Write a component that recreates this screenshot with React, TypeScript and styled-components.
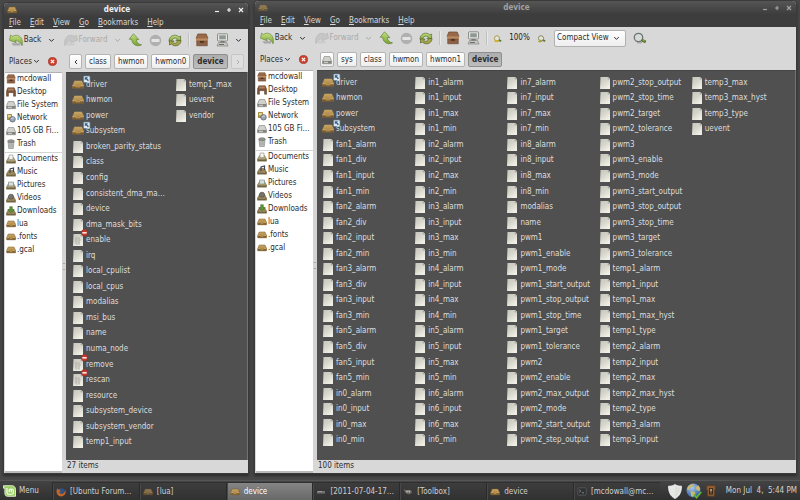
import React from "react";
import styled, { createGlobalStyle, css } from "styled-components";

const GlobalStyle = createGlobalStyle`
  * { box-sizing: border-box; }
  body {
    margin: 0;
    background: #484848;
    font-family: "DejaVu Sans Condensed", "DejaVu Sans", sans-serif;
    font-size: 8px;
    line-height: 12px;
    color: #2c2c2c;
  }
  button, select { font: inherit; color: inherit; margin: 0; padding: 0; border: 0; background: none; }
  ul { list-style: none; margin: 0; padding: 0; }
  svg { display: block; flex: none; }
`;

/* ---------- layout ---------- */

const Desktop = styled.div`
  display: flex;
  flex-direction: column;
  min-height: 100vh;
`;

const Workspace = styled.main`
  flex: 1;
  display: grid;
  grid-template-columns: 244fr 541fr;
  gap: 7px;
  padding: 0 4px 7px;
`;

const WindowFrame = styled.section<{ $top: number }>`
  display: flex;
  flex-direction: column;
  min-width: 0;
  margin-top: ${(p) => p.$top}px;
  background: #d8d8d8;
  border-radius: 4px 4px 0 0;
  box-shadow: 0 0 0 1px #3b3b3b, 0 2px 3px 1px #2b2b2b;
`;

const TitleBar = styled.header<{ $active: boolean }>`
  display: grid;
  grid-template-columns: 16px 1fr 36px;
  align-items: center;
  height: 13px;
  padding: 0 1px 0 3px;
  border-radius: 4px 4px 0 0;
  background: linear-gradient(#555, #3e3e3e);
  color: ${(p) => (p.$active ? "#f0f0f0" : "#a2a2a2")};
`;

const Title = styled.h1`
  margin: 0;
  font-size: 8px;
  line-height: 12px;
  text-align: center;
`;

const WindowButtons = styled.div`
  display: flex;
`;

const WindowButton = styled.button`
  display: grid;
  place-items: center;
  width: 12px;
  height: 12px;
`;

const MenuBar = styled.nav`
  display: flex;
  gap: 9px;
  height: 13px;
  padding: 0 5px;
  background: #3d3d3d;
  color: #d8d8d8;
`;

const MenuItem = styled.button`
  line-height: 13px;
  u { text-underline-offset: 1px; }
`;

const ToolBar = styled.div`
  display: flex;
  align-items: center;
  height: 22px;
  padding-left: 4px;
`;

const ToolButton = styled.button<{ $w: number }>`
  display: flex;
  align-items: center;
  justify-content: center;
  gap: 1px;
  width: ${(p) => p.$w}px;
  height: 20px;
  flex: none;
  white-space: nowrap;
  &:disabled { color: #a9a9a9; }
`;

const Divider = styled.span`
  width: 1px;
  height: 14px;
  margin: 0 3px;
  background: #c0c0c0;
  box-shadow: 1px 0 #e8e8e8;
`;

const ZoomLevel = styled.span`
  width: 29px;
  text-align: center;
  color: #222;
`;

const SelectWrap = styled.label`
  display: grid;
  grid-template-columns: 1fr 12px;
  align-items: center;
  width: 72px;
  height: 17px;
  margin: 0 4px 0 5px;
  border: 1px solid #b0b0b0;
  border-radius: 2px;
  background: linear-gradient(#fff, #eee);
  select {
    grid-area: 1 / 1 / 2 / 3;
    appearance: none;
    width: 100%;
    height: 15px;
    padding-left: 2px;
  }
  svg { grid-area: 1 / 2; pointer-events: none; }
`;

const LocationRow = styled.div`
  display: flex;
  align-items: center;
  height: 21px;
  padding: 0 4px;
`;

const PlacesHeader = styled.div`
  display: flex;
  align-items: center;
  gap: 8px;
  width: 61px;
  padding-left: 1px;
`;

const PlacesButton = styled.button`
  display: flex;
  align-items: center;
  gap: 1px;
`;

const PathBar = styled.nav`
  display: flex;
  gap: 3px;
  flex: 1;
`;

const PathButton = styled.button<{ $current?: boolean; $end?: boolean; $tight?: boolean }>`
  display: grid;
  place-items: center;
  height: 15px;
  min-width: 13px;
  padding: 0 ${(p) => (p.$tight ? 1 : 3)}px;
  border: 1px solid #b4b4b4;
  border-radius: 2px;
  background: linear-gradient(#fff, #eee);
  &:disabled { color: #b0b0b0; background: #dedede; border-color: #c6c6c6; }
  ${(p) => p.$end && css`margin-left: auto;`}
  ${(p) =>
    p.$current &&
    css`
      font-weight: bold;
      border-color: #8e8e8e;
      background: linear-gradient(#adadad, #bdbdbd);
    `}
`;

const Body = styled.div`
  flex: 1;
  display: grid;
  grid-template-columns: 58px 1fr;
`;

const Sidebar = styled.aside`
  padding-top: 1px;
  background: #fff;
  box-shadow: inset 0 1px #b2b2b2;
  border-bottom: 2px solid #b8b8b8;
  margin-left: 1px;
`;

const PlaceList = styled.ul<{ $height: number }>`
  display: grid;
  grid-auto-rows: 1fr;
  min-height: ${(p) => p.$height}px;
  & + & {
    margin-top: 1px;
    border-top: 1px solid #d2d2d2;
  }
`;

const PlaceButton = styled.button`
  display: flex;
  align-items: center;
  gap: 1px;
  width: 100%;
  height: 12px;
  padding-left: 1px;
  white-space: nowrap;
  text-align: left;
`;

const Content = styled.div`
  display: flex;
  flex-direction: column;
  min-width: 0;
`;

const FilesRow = styled.div`
  flex: 1;
  display: grid;
  grid-template-columns: 4px 1fr;
`;

const Sash = styled.div`
  display: grid;
  place-items: center;
  background: #d4d4d4;
  &::before {
    content: "";
    width: 2px;
    height: 5px;
    border: solid #a8a8a8;
    border-width: 1px 0;
  }
`;

const FileGrid = styled.ul<{ $columns: number; $wide: boolean }>`
  display: grid;
  grid-auto-flow: column;
  grid-template-rows: repeat(24, minmax(15px, 1fr));
  grid-template-columns: ${(p) => (p.$wide ? `repeat(${p.$columns}, minmax(0, 1fr))` : `103px 1fr`)};
  padding: ${(p) => (p.$wide ? "5px 12px 12px 5px" : "5px 5px 10px 6px")};
  background: #505050;
  border: 1px solid #737373;
  border-width: 0 1px 0 0;
  box-shadow: inset 0 1px #444;
`;

const FileItem = styled.li`
  display: flex;
  align-items: center;
  gap: 2px;
  color: #dedede;
  white-space: nowrap;
`;

const StatusBar = styled.footer`
  height: 13px;
  padding-left: 5px;
  line-height: 12px;
`;

const TaskBar = styled.footer`
  display: flex;
  align-items: stretch;
  height: 20px;
  padding-top: 1px;
  border-top: 1px solid #565656;
  background: linear-gradient(#434343, #303030);
  color: #d2d2d2;
`;

const StartButton = styled.button`
  display: flex;
  align-items: center;
  gap: 3px;
  width: 52px;
  padding-left: 3px;
`;

const TaskList = styled.div`
  flex: 1;
  display: flex;
`;

const TaskButton = styled.button<{ $active?: boolean }>`
  flex: 1 1 0;
  min-width: 0;
  display: flex;
  align-items: center;
  gap: 4px;
  padding-left: 3px;
  white-space: nowrap;
  border-left: 1px solid #2a2a2a;
  border-top: 1px solid #303030;
  box-shadow: inset 1px 0 #484848;
  background: ${(p) => (p.$active ? "linear-gradient(#858585, #686868)" : "linear-gradient(#3d3d3d, #313131)")};
  color: ${(p) => (p.$active ? "#fff" : "#cfcfcf")};
`;

const Tray = styled.div`
  display: flex;
  align-items: center;
  gap: 4px;
  padding: 0 3px 0 8px;
  white-space: nowrap;
  time { margin-left: 6px; }
`;

/* ---------- drawings ---------- */

const Chevron = ({ color = "#333" }: { color?: string }) => (
  <svg width="7" height="5" viewBox="0 0 7 5" fill="none" stroke={color}>
    <path d="M1.2 1l2.3 2.4L5.8 1" />
  </svg>
);

const Defs = () => (
  <svg width="0" height="0" aria-hidden="true">
    <defs>
      <linearGradient id="page" x1="0" y1="0" x2=".6" y2="1">
        <stop offset="0" stopColor="#c6c6be" />
        <stop offset=".5" stopColor="#d6d5cb" />
        <stop offset="1" stopColor="#f0efe6" />
      </linearGradient>
      <linearGradient id="wood" x1="0" y1="0" x2="0" y2="1">
        <stop offset="0" stopColor="#c9a663" />
        <stop offset="1" stopColor="#a37d42" />
      </linearGradient>
      <linearGradient id="leaf" x1="0" y1="0" x2="0" y2="1">
        <stop offset="0" stopColor="#c5de83" />
        <stop offset="1" stopColor="#76a332" />
      </linearGradient>
      <radialGradient id="globe" cx=".4" cy=".3" r=".7">
        <stop offset="0" stopColor="#a9c9ef" />
        <stop offset="1" stopColor="#2f5fa6" />
      </radialGradient>
    </defs>
  </svg>
);

const BackIcon = ({ off = false }: { off?: boolean }) => (
  <svg width="14" height="13" viewBox="0 0 14 13">
    <g transform={off ? "translate(14 0) scale(-1 1)" : undefined}>
      <path d="M2.500 9.300h8.500v2.200H4z" fill={off ? "#cbcbcb" : "#a6a6a6"} />
      <path
        d="M.5 6.200L1.600 1l1.700 1.500C6.500.3 11 .9 12.700 5.200c.9 2.300.9 4.500.3 6.600C12 9.200 9.500 6.700 6.200 6.600l1 2.200z"
        fill={off ? "#c6c6c6" : "url(#leaf)"}
        stroke={off ? "#b5b5b5" : "#5f7d35"}
        strokeWidth=".6"
      />
    </g>
  </svg>
);

const UpIcon = () => (
  <svg width="14" height="14" viewBox="0 0 14 14">
    <path d="M5.500.8L1.200 6.200l2.500.2c.2 3.400 2.500 6 6 6.300 1.500.1 2.800-.2 3.800-.9-3-.4-5-2.300-5.200-5.300l2.600.1z" fill="url(#leaf)" stroke="#64833a" strokeWidth=".7" />
  </svg>
);

const StopIcon = () => (
  <svg width="13" height="13" viewBox="0 0 13 13">
    <circle cx="6.500" cy="6.500" r="5.800" fill="#b0b0b0" />
    <rect x="2.500" y="5" width="8" height="3" rx=".5" fill="#e4e4e4" />
  </svg>
);

const RefreshIcon = () => (
  <svg width="14" height="13" viewBox="0 0 14 13">
    <path d="M1 7.500C.8 3.500 4 .8 7.500 1.200c1.500.2 2.600.9 3.300 1.700L12.600 2v5H7.800l1.500-2C7.500 3.200 4 4 4 7.500z" fill="url(#leaf)" stroke="#5b6d33" strokeWidth=".7" />
    <path d="M13 6.500c0 3.500-3 5.500-6 5.300-1.500-.1-2.800-.8-3.600-1.700L1.500 11V7h4.600L4.800 8.700C6.500 10 9.500 9.200 10 6.500z" fill="#a5a845" stroke="#555f30" strokeWidth=".7" />
  </svg>
);

const HomeIcon = ({ size = 14 }: { size?: number }) => (
  <svg width={size} height={size} viewBox="0 0 14 14">
    <path d="M2.800 1h8.400L13 5.500H1z" fill="#9a6a48" stroke="#6b4630" strokeWidth=".7" />
    <path d="M1 5.300h12V8H1z" fill="#bd8b60" />
    <path d="M1.700 8h10.600v4.800H1.700z" fill="#8d6044" stroke="#6b4a35" strokeWidth=".6" />
    <path d="M5 8h4v1.800H5z" fill="#4d3425" />
  </svg>
);

const DeskIcon = () => (
  <svg width="10" height="10" viewBox="0 0 14 14">
    <path d="M2.500 1h9L13.500 6v7h-3V8h-7v5h-3V6z" fill="#7b5238" stroke="#553624" strokeWidth=".6" />
    <path d="M3.500 2h7l1 3h-9z" fill="#b1825c" />
  </svg>
);

const ComputerIcon = () => (
  <svg width="13" height="14" viewBox="0 0 13 14">
    <rect x="1.500" y=".8" width="10" height="7.200" rx=".8" fill="#e5e5e1" stroke="#777" strokeWidth=".8" />
    <rect x="3.200" y="2.300" width="6.600" height="4" fill="#8e9994" />
    <path d="M4.500 8h4v2h-4z" fill="#777" />
    <path d="M2.500 9.500h8L12 13H1z" fill="#c9c9c4" stroke="#777" strokeWidth=".6" />
    <path d="M3 11.500h5" stroke="#555" strokeWidth=".8" />
  </svg>
);

const DriveIcon = () => (
  <svg width="10" height="10" viewBox="0 0 10 10">
    <path d="M2.300 1.500h5.400L9.500 6v2.700h-9V6z" fill="#d0d0cc" stroke="#7c7c78" strokeWidth=".6" />
    <path d="M.8 6h8.400v2.500H.8z" fill="#82827e" />
    <path d="M2 7.300h4" stroke="#eee" strokeWidth=".8" />
  </svg>
);

const NetworkIcon = () => (
  <svg width="10" height="10" viewBox="0 0 10 10">
    <rect x="1" y="1" width="5" height="6" rx=".5" fill="#a98f3f" />
    <rect x="2" y="2" width="3" height="2.500" fill="#e0d798" />
    <circle cx="6.500" cy="6.300" r="2.800" fill="#9aa5b4" stroke="#4a525c" strokeWidth=".6" />
    <path d="M5 6c1-1.500 2-.5 3-1" stroke="#dfe6ee" strokeWidth=".8" fill="none" />
  </svg>
);

const TrashIcon = () => (
  <svg width="10" height="10" viewBox="0 0 10 10">
    <path d="M2 2.500h6L7.300 9.500H2.700z" fill="#c2c5c1" stroke="#7c807b" strokeWidth=".6" />
    <ellipse cx="5" cy="2.200" rx="3.300" ry="1.500" fill="#8f938e" stroke="#6e716d" strokeWidth=".6" />
    <path d="M4 4.500v4M6 4.500v4" stroke="#858984" strokeWidth=".6" />
  </svg>
);

const emblem: Record<string, React.ReactNode> = {
  documents: <path d="M3 1h4v4.500H3z" fill="#f4f4ee" stroke="#8d8d86" strokeWidth=".6" />,
  music: <path d="M4 6V2l3.500-1v4" fill="none" stroke="#3d4250" strokeWidth="1.200" />,
  pictures: <path d="M2.500 2h5v4h-5z" fill="#cfe0df" stroke="#7b847b" strokeWidth=".6" />,
  videos: <circle cx="5" cy="3.800" r="2.600" fill="#77756b" stroke="#4f4d46" strokeWidth=".7" />,
  downloads: <path d="M3.700.7h2.600v3h2L5 7 1.700 3.700h2z" fill="#5d9334" stroke="#3b6420" strokeWidth=".5" />,
};

const ShelfIcon = ({ kind }: { kind: string }) => (
  <svg width="10" height="10" viewBox="0 0 10 10">
    <path d="M2.500 3.500h5L9.500 7v2.200h-9V7z" fill={kind === "documents" || kind === "pictures" ? "#b5ab87" : "#9b8453"} stroke="#6a5c3c" strokeWidth=".5" />
    {emblem[kind]}
    <path d="M.8 6.800h8.400V9H.8z" fill="#70633f" />
    <path d="M1.500 7.200h7" stroke="#c4b68a" strokeWidth=".6" />
  </svg>
);

const SmallFolder = ({ dim = false }: { dim?: boolean }) => (
  <svg width="10" height="8" viewBox="0 0 10 8" opacity={dim ? 0.6 : 1}>
    <path d="M2.200 1h5.800L9.500 4.200v2.600H.7V4.500z" fill="url(#wood)" stroke="#7a5a2c" strokeWidth=".5" />
    <path d="M.8 4.800h8.500v1.900H.8z" fill="#80602f" />
    <path d="M.9 4.600h2.300l.6.700h2.400l.6-.7h2.400" fill="none" stroke="#d8b873" strokeWidth=".6" />
  </svg>
);

type Kind = "folder" | "link" | "file" | "locked";

const FileIcon = ({ kind }: { kind: Kind }) =>
  kind === "folder" || kind === "link" ? (
    <svg width="12" height="12" viewBox="0 0 12 12" overflow="visible">
      <path d="M2.500 1.800h7.300l2 4v3.400H.4V6.500z" fill="url(#wood)" />
      <path d="M.4 7h11.400v2.300H.4z" fill="#7d5d2e" />
      <path d="M.5 6.800h2.800l.8 1h3.800l.8-1h3" fill="none" stroke="#dcbb76" strokeWidth=".7" />
      {kind === "link" && (
        <g transform="translate(11.500 -3)">
          <rect width="6.500" height="6.500" rx="1" fill="#dce8f2" stroke="#5c7c98" strokeWidth=".7" />
          <path d="M1.300 1.300h3.200l-1 1 1.900 1.900-1 1-1.900-1.900-1.200 1z" fill="#35607f" />
        </g>
      )}
    </svg>
  ) : (
    <svg width="12" height="12" viewBox="0 0 12 12" overflow="visible">
      <path d="M1.500 0h7.700l1.800 1.700V12H1z" fill="url(#page)" />
      <path d="M8.600.2L11 2.400 8.800 2.200z" fill="#a3a39b" />
      {kind === "locked" && (
        <>
          <path d="M3 4h5M3 6h6M3 8h5M4 10h4M4 3v7M7 4v6" stroke="#a9aaa2" strokeWidth=".6" />
          <circle cx="12.500" cy="-1.200" r="3.200" fill="#c93a2e" stroke="#8a2a22" strokeWidth=".5" />
          <rect x="10.300" y="-2" width="4.400" height="1.600" fill="#f2e4e0" />
        </>
      )}
    </svg>
  );

const CloseIcon = () => (
  <svg width="9" height="9" viewBox="0 0 9 9">
    <circle cx="4.500" cy="4.500" r="4.100" fill="#cf3f2c" stroke="#9a2a1c" strokeWidth=".6" />
    <path d="M2.900 2.900l3.200 3.200m0-3.200L2.900 6.100" stroke="#fff" strokeWidth="1.300" />
  </svg>
);

const ZoomIcon = ({ plus = false }: { plus?: boolean }) => (
  <svg width="9" height="9" viewBox="0 0 9 9">
    <circle cx="4" cy="4.300" r="2.600" fill="#e3e3d6" stroke={plus ? "#8a8c6c" : "#aa9c55"} strokeWidth="1" />
    <path d="M5.700 6.200l2.500 1" stroke="#657a39" strokeWidth="1.800" />
    {plus ? <path d="M1 7.500h4M3 5.500v3" stroke="#b5a435" strokeWidth="1.200" /> : <path d="M1.500 7.200h4" stroke="#d9b31c" strokeWidth="1.800" />}
  </svg>
);

const FindIcon = () => (
  <svg width="14" height="13" viewBox="0 0 14 13">
    <circle cx="5.500" cy="5.500" r="4.200" fill="#d5dada" stroke="#70746f" strokeWidth="1.300" />
    <path d="M4 10.800h5" stroke="#999" />
    <path d="M8.500 7.800l4.200 2.200" stroke="#53702d" strokeWidth="2.600" />
    <path d="M9.500 8l2.500 1.200" stroke="#9fbb5e" strokeWidth=".8" />
  </svg>
);

const MintIcon = () => (
  <svg width="13" height="12" viewBox="0 0 13 12">
    <path d="M.5.7h8.300c2.200 0 3.700 1.500 3.700 3.600v7H4.700c-1.800 0-2.800-1.200-2.800-2.900V3.200H.5z" fill="#9bcf63" stroke="#e6f5d4" strokeWidth=".9" />
    <path d="M4 3v4.700c0 1 .6 1.500 1.500 1.500h3.300c.9 0 1.500-.6 1.500-1.500V5.200c0-1.600-2-1.600-2 0v2m0-2c0-1.600-2.100-1.600-2.100 0v2" fill="none" stroke="#fff" strokeWidth="1.100" />
  </svg>
);

const FirefoxIcon = () => (
  <svg width="10" height="10" viewBox="0 0 10 10">
    <circle cx="5.200" cy="4.800" r="3.600" fill="#2e5288" />
    <path d="M1.500 1.200C.2 3 .1 5.500 1.400 7.500c2 2.700 6 2.400 7.600-.2.900-1.500.9-3.200.1-4.700C9 5 8 7 6 7 4.300 7 3.200 6 3.300 4.700L5 4.200 3.200 2.500c-.8 0-1.400-.4-1.700-1.300z" fill="#c46428" />
  </svg>
);

const CameraIcon = () => (
  <svg width="10" height="8" viewBox="0 0 10 8">
    <rect x="1" y="3" width="8" height="2.500" fill="#727272" />
    <path d="M2 3.500h4" stroke="#a5a5a5" strokeWidth=".8" />
  </svg>
);

const GimpIcon = () => (
  <svg width="10" height="8" viewBox="0 0 10 8">
    <path d="M1 1l2 1.200C5 1.300 8.500 1.500 9 4c-.5 2.200-4 3-5.500 1.500C2 5 1.200 3 1 1z" fill="#6d6a64" />
    <circle cx="4" cy="3.500" r=".9" fill="#bbb" />
    <circle cx="6.300" cy="3.500" r=".9" fill="#bbb" />
  </svg>
);

const TerminalIcon = () => (
  <svg width="10" height="9" viewBox="0 0 10 9">
    <rect x=".8" y=".8" width="8.400" height="7.400" rx=".5" fill="#2f3233" stroke="#5c5c5c" strokeWidth=".8" />
    <path d="M2.300 2.800l1.500 1.200-1.500 1.200M5 5.800h2" fill="none" stroke="#9a9a9a" strokeWidth=".8" />
  </svg>
);

const ShieldIcon = () => (
  <svg width="14" height="15" viewBox="0 0 14 15">
    <path d="M7 .5c2 1.300 4.200 1.800 6.500 1.600C13.600 8 11.500 12.500 7 14.600 2.500 12.500.4 8 .5 2.100 2.800 2.300 5 1.800 7 .5z" fill="#e6e8e4" stroke="#fafafa" strokeWidth=".7" />
    <path d="M7 2v11c3.300-1.900 5-5 5.200-9.500C10.300 3.500 8.600 3 7 2z" fill="#dcdfda" />
  </svg>
);

const GlobeIcon = () => (
  <svg width="16" height="16" viewBox="0 0 16 16">
    <circle cx="7.500" cy="7.500" r="7" fill="url(#globe)" />
    <path d="M2 3.500C4 1 6.500.8 8 1.500L6.500 4 4 5l-.5 2L1 6.500zM4.500 8l3.500.5 1.500 2-2.500 3.500-2-1zM9.500 3.500l3-1 1.800 3-1 3-2.800-1.500z" fill="#c7b873" />
    <path d="M8 11.500l2.500 3L15.300 9" fill="none" stroke="#63b52f" strokeWidth="1.800" />
  </svg>
);

const KeyringIcon = () => (
  <svg width="10" height="12" viewBox="0 0 10 12">
    <path d="M.8.8h8.400v3.500l-.8 1v5.900H1.600V5.300l-.8-1z" fill="#946032" stroke="#5f3d1e" strokeWidth=".6" />
    <rect x="3" y="3" width="4" height="6.500" fill="#3a2a1e" />
    <circle cx="5" cy="5" r="1.200" fill="#b3906a" />
    <path d="M5 5v3.500" stroke="#b3906a" strokeWidth=".8" />
  </svg>
);

/* ---------- data ---------- */

const leftFiles =
  "driver@ hwmon/ power/ subsystem@ broken_parity_status class config consistent_dma_ma… device dma_mask_bits enable! irq local_cpulist local_cpus modalias msi_bus name numa_node remove! rescan! resource subsystem_device subsystem_vendor temp1_input temp1_max uevent vendor";

const rightFiles =
  "driver@ hwmon/ power/ subsystem@ fan1_alarm fan1_div fan1_input fan1_min fan2_alarm fan2_div fan2_input fan2_min fan3_alarm fan3_div fan3_input fan3_min fan5_alarm fan5_div fan5_input fan5_min in0_alarm in0_input in0_max in0_min " +
  [1, 2, 3, 4, 5, 6, 7].map((n) => `in${n}_alarm in${n}_input in${n}_max in${n}_min`).join(" ") +
  " in8_alarm in8_input in8_max in8_min modalias name pwm1 pwm1_enable pwm1_mode pwm1_start_output pwm1_stop_output pwm1_stop_time pwm1_target pwm1_tolerance pwm2 pwm2_enable pwm2_max_output pwm2_mode pwm2_start_output pwm2_step_output pwm2_stop_output pwm2_stop_time pwm2_target pwm2_tolerance pwm3 pwm3_enable pwm3_mode pwm3_start_output pwm3_stop_output pwm3_stop_time pwm3_target pwm3_tolerance temp1_alarm temp1_input temp1_max temp1_max_hyst temp1_type temp2_alarm temp2_input temp2_max temp2_max_hyst temp2_type temp3_alarm temp3_input temp3_max temp3_max_hyst temp3_type uevent";

const suffixKinds: Record<string, Kind> = { "@": "link", "/": "folder", "!": "locked" };

const parseFiles = (text: string) =>
  text.split(" ").map((entry) => {
    const kind = suffixKinds[entry.slice(-1)];
    return kind ? { name: entry.slice(0, -1), kind } : { name: entry, kind: "file" as Kind };
  });

const places: [string, React.ReactNode][] = [
  ["mcdowall", <HomeIcon size={10} />],
  ["Desktop", <DeskIcon />],
  ["File System", <DriveIcon />],
  ["Network", <NetworkIcon />],
  ["105 GB Fi…", <DriveIcon />],
  ["Trash", <TrashIcon />],
];

const bookmarks: [string, React.ReactNode][] = [
  ["Documents", <ShelfIcon kind="documents" />],
  ["Music", <ShelfIcon kind="music" />],
  ["Pictures", <ShelfIcon kind="pictures" />],
  ["Videos", <ShelfIcon kind="videos" />],
  ["Downloads", <ShelfIcon kind="downloads" />],
  ["lua", <SmallFolder />],
  [".fonts", <SmallFolder />],
  [".gcal", <SmallFolder />],
];

const tasks: [string, React.ReactNode, boolean?][] = [
  ["[Ubuntu Forum…", <FirefoxIcon />],
  ["[lua]", <SmallFolder dim />],
  ["device", <SmallFolder />, true],
  ["[2011-07-04-17…", <CameraIcon />],
  ["[Toolbox]", <GimpIcon />],
  ["device", <SmallFolder />],
  ["[mcdowall@mc…", <TerminalIcon />],
];

/* ---------- components ---------- */

const Places = ({ items, height }: { items: [string, React.ReactNode][]; height: number }) => (
  <PlaceList $height={height}>
    {items.map(([name, icon]) => (
      <li key={name}>
        <PlaceButton>
          {icon}
          {name}
        </PlaceButton>
      </li>
    ))}
  </PlaceList>
);

type FileWindowProps = {
  active: boolean;
  wide: boolean;
  path: string[];
  files: string;
  status: string;
};

const FileWindow = ({ active, wide, path, files, status }: FileWindowProps) => (
  <WindowFrame $top={active ? 3 : 1}>
    <TitleBar $active={active}>
      <SmallFolder dim={!active} />
      <Title>device</Title>
      <WindowButtons>
        {["M1 4.500h4", "M1 3h4M3 1v4", "M1 1l4 4M5 1L1 5"].map((d, i) => (
          <WindowButton key={d} aria-label={["Minimize", "Maximize", "Close"][i]}>
            <svg width="6" height="6" viewBox="0 0 6 6" stroke="currentColor" strokeWidth="1.200">
              <path d={d} />
            </svg>
          </WindowButton>
        ))}
      </WindowButtons>
    </TitleBar>
    <MenuBar>
      {["File", "Edit", "View", "Go", "Bookmarks", "Help"].map((m) => (
        <MenuItem key={m}>
          <u>{m[0]}</u>
          {m.slice(1)}
        </MenuItem>
      ))}
    </MenuBar>
    <ToolBar>
      <ToolButton $w={34}><BackIcon />Back</ToolButton>
      <ToolButton $w={19} aria-label="Back history"><Chevron /></ToolButton>
      <ToolButton $w={49} disabled><BackIcon off />Forward</ToolButton>
      <ToolButton $w={15} disabled aria-label="Forward history"><Chevron color="#aaa" /></ToolButton>
      <ToolButton $w={20} aria-label="Up"><UpIcon /></ToolButton>
      <ToolButton $w={20} disabled aria-label="Stop"><StopIcon /></ToolButton>
      <ToolButton $w={20} aria-label="Reload"><RefreshIcon /></ToolButton>
      <Divider />
      <ToolButton $w={20} aria-label="Home"><HomeIcon /></ToolButton>
      <ToolButton $w={20} aria-label="Computer"><ComputerIcon /></ToolButton>
      {wide ? (
        <>
          <Divider />
          <ToolButton $w={15} aria-label="Zoom out"><ZoomIcon /></ToolButton>
          <ZoomLevel>100%</ZoomLevel>
          <ToolButton $w={15} aria-label="Zoom in"><ZoomIcon plus /></ToolButton>
          <SelectWrap>
            <select aria-label="View mode" defaultValue="Compact View">
              <option>Compact View</option>
              <option>Icon View</option>
              <option>List View</option>
            </select>
            <Chevron />
          </SelectWrap>
          <ToolButton $w={20} aria-label="Search"><FindIcon /></ToolButton>
        </>
      ) : (
        <ToolButton $w={13} aria-label="More"><Chevron /></ToolButton>
      )}
    </ToolBar>
    <LocationRow>
      <PlacesHeader>
        <PlacesButton>Places<Chevron /></PlacesButton>
        <button aria-label="Close places"><CloseIcon /></button>
      </PlacesHeader>
      <PathBar>
        {wide ? (
          <PathButton $tight aria-label="Drive"><DriveIcon /></PathButton>
        ) : (
          <PathButton aria-label="Scroll left">
            <svg width="4" height="6" viewBox="0 0 4 6" fill="none" stroke="#333"><path d="M3 1L1 3l2 2" /></svg>
          </PathButton>
        )}
        {path.map((p, i) => (
          <PathButton key={p} $current={i === path.length - 1}>{p}</PathButton>
        ))}
        {!wide && (
          <PathButton $end disabled aria-label="Scroll right">
            <svg width="4" height="6" viewBox="0 0 4 6" fill="none" stroke="#b0b0b0"><path d="M1 1l2 2-2 2" /></svg>
          </PathButton>
        )}
      </PathBar>
    </LocationRow>
    <Body>
      <Sidebar>
        <Places items={places} height={78} />
        <Places items={bookmarks} height={105} />
      </Sidebar>
      <Content>
        <FilesRow>
          <Sash />
          <FileGrid $columns={5} $wide={wide}>
            {parseFiles(files).map((f) => (
              <FileItem key={f.name}>
                <FileIcon kind={f.kind} />
                {f.name}
              </FileItem>
            ))}
          </FileGrid>
        </FilesRow>
        <StatusBar>{status}</StatusBar>
      </Content>
    </Body>
  </WindowFrame>
);

export default function App() {
  return (
    <>
      <GlobalStyle />
      <Desktop>
        <Workspace>
          <FileWindow active wide={false} path={["class", "hwmon", "hwmon0", "device"]} files={leftFiles} status="27 items" />
          <FileWindow active={false} wide path={["sys", "class", "hwmon", "hwmon1", "device"]} files={rightFiles} status="100 items" />
        </Workspace>
        <TaskBar>
          <StartButton><MintIcon />Menu</StartButton>
          <TaskList>
            {tasks.map(([name, icon, on], i) => (
              <TaskButton key={i} $active={on}>
                {icon}
                {name}
              </TaskButton>
            ))}
          </TaskList>
          <Tray>
            <ShieldIcon />
            <GlobeIcon />
            <KeyringIcon />
            <time>Mon Jul&nbsp; 4,&nbsp; 5:44 PM</time>
          </Tray>
        </TaskBar>
        <Defs />
      </Desktop>
    </>
  );
}
